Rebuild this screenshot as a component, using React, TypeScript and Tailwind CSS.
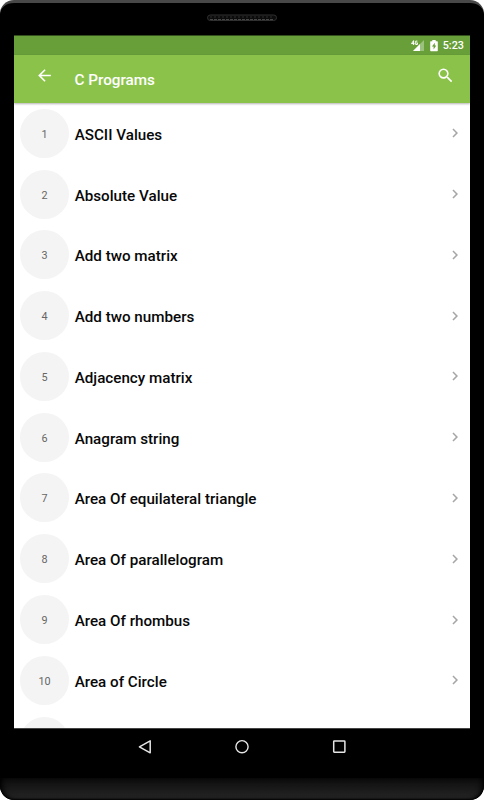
import { MdArrowBack, MdChevronRight, MdSearch } from 'react-icons/md';

const programs = [
  'ASCII Values',
  'Absolute Value',
  'Add two matrix',
  'Add two numbers',
  'Adjacency matrix',
  'Anagram string',
  'Area Of equilateral triangle',
  'Area Of parallelogram',
  'Area Of rhombus',
  'Area of Circle',
];

function Speaker() {
  return (
    <svg width="70" height="8" viewBox="0 0 70 8" fill="none">
      <rect x="0.5" y="1" width="69" height="5.5" rx="2.75" fill="#0c0c0c" stroke="#303030" />
      <path d="M3 3h64" stroke="#2c2c2c" strokeDasharray="2 2" />
      <path d="M3 5.5h64" stroke="#484848" strokeDasharray="3 1" />
    </svg>
  );
}

function StatusBar() {
  return (
    <div className="flex h-[19px] shrink-0 items-center justify-end bg-[#689f38] pr-[6px] text-white">
      <svg width="14" height="12" viewBox="0 0 14 12" className="mr-[5px]">
        <path d="M13 0v11H2z" fill="#fff" fillOpacity="0.35" />
        <path d="M9 4v7H2z" fill="#fff" />
        <path d="M2.6 5V.6L.5 3.6h3M6.4 1.1H4.7v3.4h1.7V2.8h-.9" fill="none" stroke="#fff" strokeWidth="1" />
      </svg>
      <svg width="8" height="12" viewBox="0 0 8 12" className="mr-[5px]">
        <path d="M2.3 0h3.4v1.2H7.2q.6 0 .6.6v8.8q0 .6-.6.6H.8q-.6 0-.6-.6V1.8q0-.6.6-.6h1.5z" fill="#fff" />
        <path d="M4.8 2.8 1.9 6.6h1.7v2.8l2.7-3.9H4.8z" fill="#689f38" />
      </svg>
      <span className="pt-[2px] text-[10.8px] leading-none font-medium">5:23</span>
    </div>
  );
}

function Toolbar() {
  return (
    <header className="relative flex h-[48px] shrink-0 items-center bg-[#8bc34a] pr-[15px] pl-[21px] text-white shadow-[0_1px_2px_rgba(0,0,0,0.3)]">
      <MdArrowBack size={19} className="mb-[7px]" />
      <h1 className="ml-[20.5px] flex-1 pt-[3px] text-[15.25px] leading-none font-medium">C Programs</h1>
      <MdSearch size={19} className="mb-[7px]" />
    </header>
  );
}

function ProgramRow({ index, name }: { index: number; name: string }) {
  return (
    <li className="flex h-[60.78px] shrink-0 items-center px-[6px]">
      <span className="flex size-[49px] shrink-0 items-center justify-center rounded-full bg-[#f4f4f4] pt-[3px] text-[10.8px] text-[#666]">
        {index}
      </span>
      <span className="ml-[5.7px] flex-1 pt-[4px] text-[15.2px] leading-none font-medium text-[#080808]">{name}</span>
      <MdChevronRight size={18} className="text-[#a6a6a6]" />
    </li>
  );
}

function NavBar() {
  return (
    <nav className="flex h-[50px] justify-center gap-[83px] border-t border-[#444] pt-[10px]">
      <svg width="14" height="16" viewBox="0 0 14 16" fill="none" stroke="#e6e6e6" strokeWidth="1.5">
        <path d="M12.2 1.8v12L1.4 7.8z" strokeLinejoin="round" />
      </svg>
      <svg width="14" height="16" viewBox="0 0 14 16" fill="none" stroke="#e6e6e6" strokeWidth="1.4">
        <circle cx="7" cy="7.7" r="6.1" />
      </svg>
      <svg width="14" height="16" viewBox="0 0 14 16" fill="none" stroke="#e6e6e6" strokeWidth="1.5">
        <rect x="1.7" y="2" width="11.2" height="11.2" rx="0.6" />
      </svg>
    </nav>
  );
}

export default function App() {
  return (
    <div className="h-[800px] w-[484px] bg-white font-[Roboto,sans-serif]">
      <div className="flex h-full flex-col overflow-hidden rounded-[14px] border-t-[3px] border-[#484848] bg-black">
        <div className="flex h-[32px] shrink-0 justify-center pt-[11px]">
          <Speaker />
        </div>

        <div className="mx-[14px] flex h-[693px] shrink-0 flex-col overflow-hidden border-t border-[#34501c] bg-white">
          <StatusBar />
          <Toolbar />
          <ul className="flex flex-1 flex-col overflow-hidden">
            {programs.map((name, i) => (
              <ProgramRow key={name} index={i + 1} name={name} />
            ))}
            {/* next row, only the top of its badge is scrolled into view */}
            <li className="h-[60.78px] shrink-0 px-[6px] pt-[6px]">
              <div className="size-[49px] rounded-full bg-[#f4f4f4]" />
            </li>
          </ul>
        </div>

        <div className="mx-[14px] shrink-0">
          <NavBar />
        </div>

        <div className="flex-1 rounded-b-[14px] bg-linear-to-b from-[#0d0d0d] to-[#272727] shadow-[inset_0_-1px_2px_#000,inset_5px_0_6px_-3px_#000,inset_-5px_0_6px_-3px_#000]" />
      </div>
    </div>
  );
}
